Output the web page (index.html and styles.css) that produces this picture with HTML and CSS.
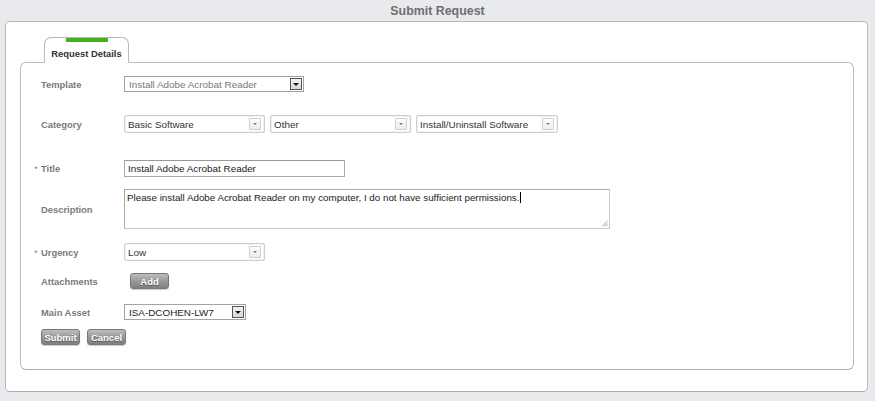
FILE: index.html
```html
<!DOCTYPE html>
<html>
<head>
<meta charset="utf-8">
<link rel="stylesheet" href="styles.css">
</head>
<body>
<div class="page-title">Submit Request</div>
<div class="outer">
  <div class="tab"><span class="tab-bar"></span><span class="tab-text">Request Details</span></div>
  <div class="panel">
    <div class="row r1">
      <div class="label">Template</div>
      <div class="select classic w-template"><span class="val muted">Install Adobe Acrobat Reader</span><span class="arrow-classic"></span></div>
    </div>
    <div class="row r2">
      <div class="label">Category</div>
      <div class="selects">
        <div class="select w-cat"><span class="val">Basic Software</span><span class="arrow"></span></div>
        <div class="select w-cat"><span class="val">Other</span><span class="arrow"></span></div>
        <div class="select w-cat3"><span class="val">Install/Uninstall Software</span><span class="arrow"></span></div>
      </div>
    </div>
    <div class="row r3">
      <div class="label"><span class="req">*</span>Title</div>
      <div class="input w-title">Install Adobe Acrobat Reader</div>
    </div>
    <div class="row r4">
      <div class="label">Description</div>
      <div class="textarea">Please install Adobe Acrobat Reader on my computer, I do not have sufficient permissions.<span class="caret"></span>
        <svg class="grip" width="7" height="7" viewBox="0 0 7 7"><path d="M6.5 1 L1 6.5 M6.5 3.5 L3.5 6.5 M6.5 5.5 L5.5 6.5" stroke="#9a9a9a" stroke-width="0.9" fill="none"/></svg>
      </div>
    </div>
    <div class="row r5">
      <div class="label"><span class="req">*</span>Urgency</div>
      <div class="select w-cat"><span class="val">Low</span><span class="arrow"></span></div>
    </div>
    <div class="row r6">
      <div class="label">Attachments</div>
      <button class="btn btn-add">Add</button>
    </div>
    <div class="row r7">
      <div class="label">Main Asset</div>
      <div class="select classic w-asset"><span class="val dark">ISA-DCOHEN-LW7</span><span class="arrow-classic"></span></div>
    </div>
    <div class="actions">
      <button class="btn">Submit</button>
      <button class="btn">Cancel</button>
    </div>
  </div>
</div>
</body>
</html>
```
FILE: styles.css
```css
html, body {
  margin: 0;
  padding: 0;
}
body {
  background: #e8eaed;
  font-family: "Liberation Sans", Arial, sans-serif;
  width: 875px;
  height: 401px;
  overflow: hidden;
}
.page-title {
  height: 21px;
  line-height: 22px;
  text-align: center;
  font-size: 12.4px;
  font-weight: bold;
  color: #6e6e6e;
}
.outer {
  margin: 0 7px 0 5px;
  background: #fff;
  border: 1px solid #b9b9b9;
  border-bottom-color: #aaa;
  border-radius: 5px;
  padding: 15px 13px 21px 14px;
}
.tab {
  position: relative;
  z-index: 1;
  margin-left: 24px;
  width: 83px;
  height: 24px;
  border: 1px solid #b8b8b8;
  border-bottom: 1px solid #fff;
  border-radius: 7px 7px 0 0;
  background: #fff;
  margin-bottom: -1px;
  display: flex;
  flex-direction: column;
  align-items: center;
}
.tab-bar {
  width: 42px;
  height: 4px;
  background: #43b11b;
  margin-left: 1px;
}
.tab-text {
  margin-top: 6px;
  font-size: 9.4px;
  font-weight: bold;
  color: #333;
}
.panel {
  border: 1px solid #bdbdbd;
  border-bottom-color: #b0b0b0;
  border-radius: 6px;
  padding: 13px 20px 24px 20px;
}
.row {
  display: flex;
  align-items: center;
}
.r1 { margin-bottom: 23px; }
.r2 { margin-bottom: 27px; }
.r3 { margin-bottom: 12px; }
.r4 { margin-bottom: 14px; }
.r5 { margin-bottom: 12px; }
.r6 { margin-bottom: 15px; }
.r7 { margin-bottom: 9px; }
.label {
  width: 83px;
  flex: none;
  font-size: 9.4px;
  font-weight: bold;
  color: #7a7a7a;
}
.req {
  display: inline-block;
  width: 7px;
  margin-left: -7px;
  font-weight: normal;
  color: #888;
}
.selects {
  display: flex;
  gap: 5px;
}
.select {
  box-sizing: border-box;
  height: 18px;
  border: 1px solid #cdcdcd;
  border-radius: 2px;
  background: #fff;
  display: flex;
  align-items: center;
  justify-content: space-between;
  padding: 0 3px 0 3px;
  box-shadow: inset 0 0 0 1px #f2f2f2;
}
.w-cat { width: 141px; }
.w-cat3 { width: 142px; }
.w-template { width: 180px; }
.w-asset { width: 122px; }
.val {
  font-size: 9.9px;
  color: #333;
  white-space: nowrap;
}
.val.muted { color: #777; }
.val.dark { color: #222; }
.arrow {
  box-sizing: border-box;
  width: 12px;
  height: 12px;
  border: 1px solid #cfcfcf;
  border-radius: 1px;
  background: linear-gradient(#fff, #ececec);
  display: flex;
  align-items: center;
  justify-content: center;
}
.arrow::after {
  content: "";
  width: 0;
  height: 0;
  border-left: 2px solid transparent;
  border-right: 2px solid transparent;
  border-top: 2px solid #777;
}
.select.classic {
  height: 16px;
  border: 1px solid #a3a3a3;
  border-radius: 0;
  box-shadow: none;
  padding: 0 1px 0 4px;
}
.arrow-classic {
  box-sizing: border-box;
  width: 12px;
  height: 12px;
  border: 1px solid #555;
  background: linear-gradient(#f4f4f4, #d8d8d8);
  display: flex;
  align-items: center;
  justify-content: center;
}
.arrow-classic::after {
  content: "";
  width: 0;
  height: 0;
  border-left: 3px solid transparent;
  border-right: 3px solid transparent;
  border-top: 3px solid #111;
}
.input {
  box-sizing: border-box;
  width: 221px;
  height: 17px;
  border: 1px solid #a9a9a9;
  border-top-color: #999;
  background: #fff;
  font-size: 9.9px;
  color: #222;
  padding: 0 3px;
  line-height: 15px;
}
.textarea {
  position: relative;
  box-sizing: border-box;
  width: 486px;
  height: 40px;
  border: 1px solid #aaa;
  border-right-color: #c8c8c8;
  border-bottom-color: #c8c8c8;
  background: #fff;
  font-size: 9.8px;
  color: #222;
  padding: 2px 2px;
  line-height: 12px;
}
.caret {
  display: inline-block;
  width: 1px;
  height: 11px;
  background: #000;
  vertical-align: -2px;
  margin-left: 1px;
}
.grip {
  position: absolute;
  right: 1px;
  bottom: 1px;
}
.btn {
  box-sizing: border-box;
  height: 16px;
  width: 39px;
  padding: 0;
  border: 1px solid #777;
  border-radius: 3px;
  background: linear-gradient(#bdbdbd, #9a9a9a 50%, #808080);
  color: #fff;
  font-family: "Liberation Sans", Arial, sans-serif;
  font-size: 9.5px;
  font-weight: bold;
  text-shadow: 0 1px 1px #555;
  box-shadow: 0 1px 1px rgba(0,0,0,0.2);
}
.btn-add {
  margin-left: 6px;
}
.actions {
  display: flex;
  gap: 7px;
}
```
